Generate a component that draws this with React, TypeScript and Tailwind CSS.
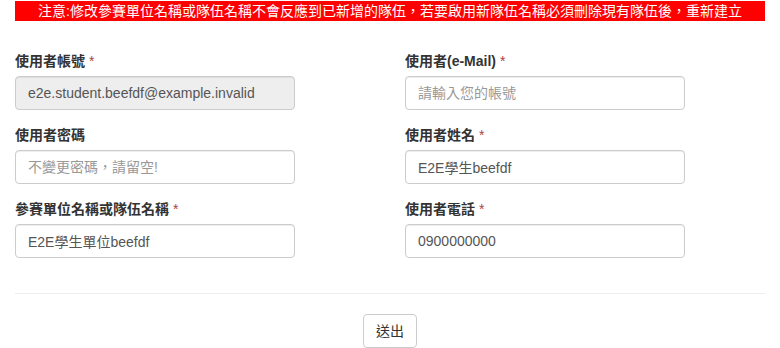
import React from 'react';

const font = { fontFamily: '"Liberation Sans", Arial, "Noto Sans CJK TC", sans-serif' };

interface FieldProps {
  label: string;
  required?: boolean;
  value?: string;
  placeholder?: string;
  disabled?: boolean;
  type?: string;
}

function Field({ label, required, value, placeholder, disabled, type = 'text' }: FieldProps) {
  return (
    <div className="mb-[15px]">
      <label className="mb-[5px] block text-[14px] font-bold leading-[20px] text-[#333]">
        {label}
        {required && <span className="ml-1 font-normal text-[#a94442]">*</span>}
      </label>
      <input
        type={type}
        defaultValue={value}
        placeholder={placeholder}
        disabled={disabled}
        className={
          'block h-[34px] w-[280px] rounded-[4px] border border-[#ccc] px-[12px] py-[6px] text-[14px] leading-[20px] text-[#555] shadow-[inset_0_1px_1px_rgba(0,0,0,0.075)] outline-none placeholder:text-[#999] ' +
          (disabled ? 'bg-[#eee]' : 'bg-white')
        }
        style={font}
      />
    </div>
  );
}

export default function App() {
  return (
    <div className="min-h-[348px] w-[780px] bg-white px-[15px]" style={font}>
      <div className="mt-px h-[20px] bg-[#ff0000] text-center text-[14px] leading-[20px] text-white">
        注意:修改參賽單位名稱或隊伍名稱不會反應到已新增的隊伍，若要啟用新隊伍名稱必須刪除現有隊伍後，重新建立
      </div>

      <form className="mt-[30px]" onSubmit={(e) => e.preventDefault()}>
        <div className="grid grid-cols-2 gap-x-[30px]">
          <Field label="使用者帳號" required value="e2e.student.beefdf@example.invalid" disabled />
          <Field label="使用者(e-Mail)" required placeholder="請輸入您的帳號" />
          <Field label="使用者密碼" type="password" placeholder="不變更密碼，請留空!" />
          <Field label="使用者姓名" required value="E2E學生beefdf" />
          <Field label="參賽單位名稱或隊伍名稱" required value="E2E學生單位beefdf" />
          <Field label="使用者電話" required value="0900000000" />
        </div>

        <hr className="my-[20px] border-0 border-t border-[#eee]" />

        <div className="flex justify-center">
          <button
            type="submit"
            className="h-[34px] rounded-[4px] border border-[#ccc] bg-white px-[12px] py-[6px] text-[14px] leading-[20px] text-[#333]"
          >
            送出
          </button>
        </div>
      </form>
    </div>
  );
}
